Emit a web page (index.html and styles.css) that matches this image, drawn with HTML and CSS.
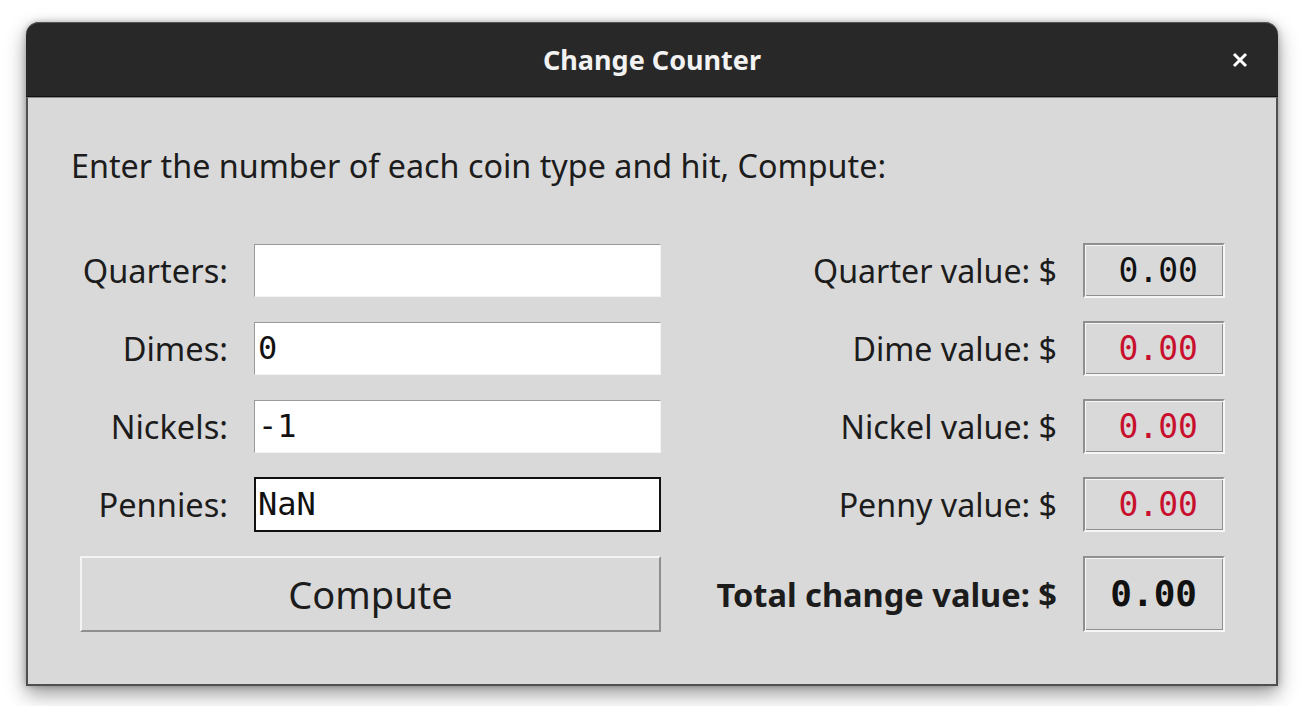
FILE: index.html
```html
<!DOCTYPE html>
<html>
<head>
<meta charset="utf-8">
<link rel="stylesheet" href="styles.css">
</head>
<body>
<div class="window">
  <div class="titlebar">
    <span class="title">Change Counter</span>
    <svg class="close" width="16" height="16" viewBox="0 0 16 16"><path d="M2 2 L14 14 M14 2 L2 14" stroke="#ffffff" stroke-width="3" stroke-linecap="butt"/></svg>
  </div>
  <div class="content">
    <p class="intro">Enter the number of each coin type and hit, Compute:</p>
    <div class="grid">
      <label class="lbl">Quarters:</label>
      <div class="entry"></div>
      <span class="vlbl">Quarter value: $</span>
      <div class="vbox">0.00</div>

      <label class="lbl">Dimes:</label>
      <div class="entry">0</div>
      <span class="vlbl">Dime value: $</span>
      <div class="vbox err">0.00</div>

      <label class="lbl">Nickels:</label>
      <div class="entry">-1</div>
      <span class="vlbl">Nickel value: $</span>
      <div class="vbox err">0.00</div>

      <label class="lbl">Pennies:</label>
      <div class="entry focus">NaN</div>
      <span class="vlbl">Penny value: $</span>
      <div class="vbox err">0.00</div>

      <button class="compute">Compute</button>
      <span class="vlbl total">Total change value: $</span>
      <div class="vbox totalbox">0.00</div>
    </div>
  </div>
</div>
</body>
</html>
```
FILE: styles.css
```css
html, body {
  margin: 0;
  padding: 0;
  background: #ffffff;
}
body {
  font-family: "Noto Sans", "Open Sans", sans-serif;
  color: #1c1c1c;
  padding-bottom: 20px;
}
.window {
  margin: 22px 0 0 26px;
  width: 1252px;
  border-radius: 13px 13px 0 0;
  box-shadow: 0 8px 20px rgba(0,0,0,0.4), 0 0 6px rgba(0,0,0,0.25);
}
.titlebar {
  height: 74px;
  background: #282828;
  border-radius: 13px 13px 0 0;
  border-bottom: 1px solid #111;
  display: flex;
  align-items: center;
  justify-content: center;
  position: relative;
  box-shadow: inset 0 1px 0 #555;
}
.title {
  color: #f2f2f2;
  font-weight: 700;
  font-size: 27px;
  margin-top: 1px;
}
.close {
  position: absolute;
  right: 30px;
  top: 30px;
}
.content {
  background: #d9d9d9;
  border: 2px solid #4f4f4f;
  border-top: 1px solid #8a8a8a;
  padding: 47px 51px 52px 43px;
}
.intro {
  margin: 0 0 59px 0;
  font-size: 32.3px;
  line-height: 40px;
}
.grid {
  display: grid;
  grid-template-columns: 157px 407px 1fr 142px;
  grid-template-rows: 53px 53px 53px 53px 76px;
  column-gap: 26px;
  row-gap: 25px;
  align-items: center;
}
.lbl, .vlbl {
  font-size: 32.6px;
  text-align: right;
  white-space: nowrap;
}
.vlbl {
  font-size: 32.2px;
}
.vlbl.total {
  font-size: 32.6px;
}
.entry {
  height: 53px;
  box-sizing: border-box;
  background: #ffffff;
  border: 1px solid;
  border-color: #9a9a9a #f4f4f4 #f4f4f4 #9a9a9a;
  font-family: "DejaVu Sans Mono", monospace;
  font-size: 32px;
  line-height: 51px;
  padding-left: 3px;
  color: #111;
}
.entry.focus {
  border: 2px solid #111;
  line-height: 51px;
  padding-left: 2px;
  height: 55px;
}
.vbox {
  height: 55px;
  box-sizing: border-box;
  border: 2px solid;
  border-color: #8f8f8f #f6f6f6 #f6f6f6 #8f8f8f;
  box-shadow: inset 1px 1px 0 #f6f6f6, inset -1px -1px 0 #8f8f8f;
  font-family: "DejaVu Sans Mono", monospace;
  font-size: 33px;
  line-height: 51px;
  text-align: right;
  padding-right: 25px;
  color: #111;
}
.vbox.err {
  color: #c8102e;
}
.totalbox {
  height: 76px;
  line-height: 72px;
  font-weight: 700;
  font-size: 36px;
  padding-right: 26px;
}
.total {
  font-weight: 700;
}
.compute {
  grid-column: 1 / 3;
  margin-left: 9px;
  height: 76px;
  background: #d9d9d9;
  border: 2px solid;
  border-color: #f4f4f4 #8f8f8f #8f8f8f #f4f4f4;
  font-family: "Noto Sans", "Open Sans", sans-serif;
  font-size: 38px;
  color: #1c1c1c;
  padding: 0;
}
```
